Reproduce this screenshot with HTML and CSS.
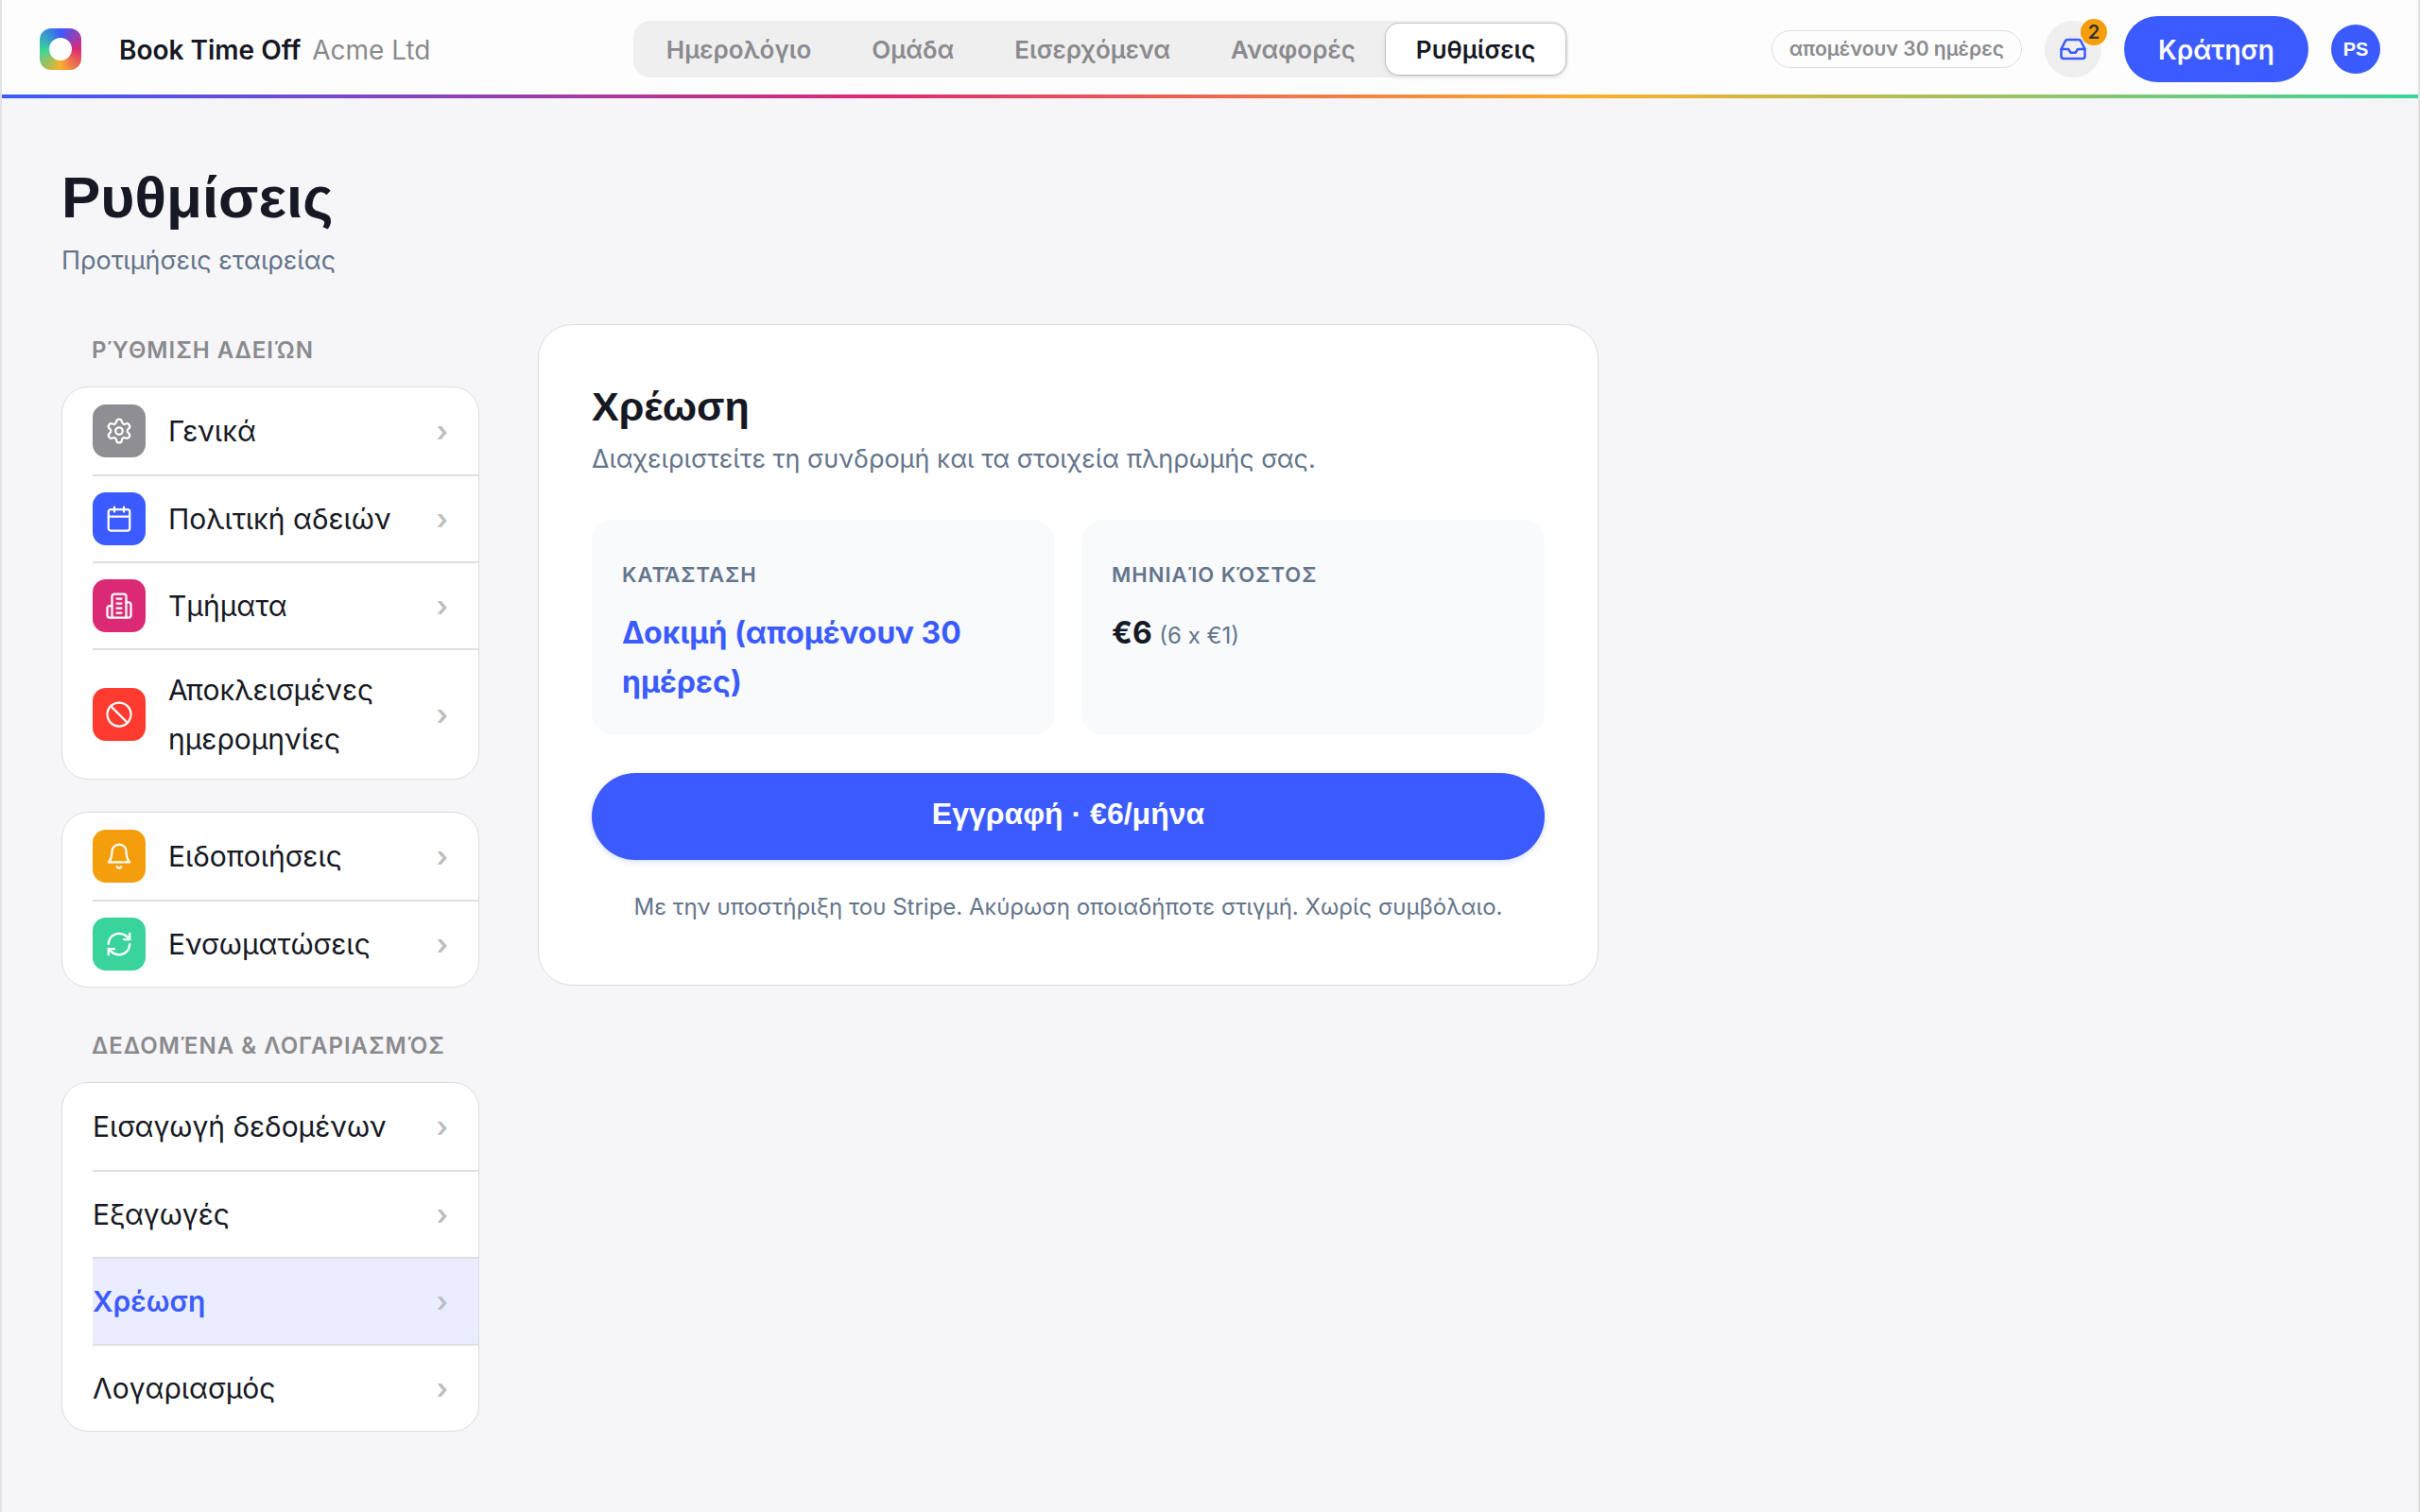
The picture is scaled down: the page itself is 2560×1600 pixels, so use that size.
FILE: index.html
```html
<!DOCTYPE html>
<html lang="el">
<head>
    <meta charset="UTF-8">
    <meta name="viewport" content="width=device-width, initial-scale=1.0">
    <title>Ρυθμίσεις - Book Time Off</title>
    <link rel="stylesheet" href="styles.css">
</head>
<body>
    <!-- Header -->
    <header class="topbar">
        <a class="brand" href="#">
            <span class="logo"></span>
            <span class="brand-text"><strong>Book Time Off</strong> <span class="company">Acme Ltd</span></span>
        </a>
        <nav class="tabs">
            <a href="#">Ημερολόγιο</a>
            <a href="#">Ομάδα</a>
            <a href="#">Εισερχόμενα</a>
            <a href="#">Αναφορές</a>
            <a class="active" href="#">Ρυθμίσεις</a>
        </nav>
        <div class="actions">
            <span class="trial">απομένουν 30 ημέρες</span>
            <button class="inbox" type="button" aria-label="Εισερχόμενα">
                <svg viewBox="0 0 24 24"><path d="M22 12h-6l-2 3h-4l-2-3H2"/><path d="M5.45 5.11 2 12v6a2 2 0 0 0 2 2h16a2 2 0 0 0 2-2v-6l-3.45-6.89A2 2 0 0 0 16.76 4H7.24a2 2 0 0 0-1.79 1.11z"/></svg>
                <span class="badge">2</span>
            </button>
            <button class="book" type="button">Κράτηση</button>
            <button class="avatar" type="button">PS</button>
        </div>
    </header>

    <main class="page">
        <h1>Ρυθμίσεις</h1>
        <p class="subtitle">Προτιμήσεις εταιρείας</p>

        <div class="layout">
            <!-- Settings menu -->
            <aside class="menu">
                <h2 class="menu-title">ΡΎΘΜΙΣΗ ΑΔΕΙΏΝ</h2>
                <div class="group">
                    <a class="row" href="#">
                        <span class="icon gray"><svg viewBox="0 0 24 24"><path d="M9.67 4.14a2.34 2.34 0 0 1 4.66 0 2.34 2.34 0 0 0 3.32 1.91 2.34 2.34 0 0 1 2.33 4.04 2.34 2.34 0 0 0 0 3.83 2.34 2.34 0 0 1-2.33 4.03 2.34 2.34 0 0 0-3.32 1.92 2.34 2.34 0 0 1-4.66 0 2.34 2.34 0 0 0-3.32-1.92 2.34 2.34 0 0 1-2.33-4.03 2.34 2.34 0 0 0 0-3.83 2.34 2.34 0 0 1 2.33-4.04 2.34 2.34 0 0 0 3.32-1.91"/><circle cx="12" cy="12" r="3"/></svg></span>
                        <span class="label">Γενικά</span>
                        <span class="chevron">›</span>
                    </a>
                    <a class="row" href="#">
                        <span class="icon blue"><svg viewBox="0 0 24 24"><rect x="3" y="4" width="18" height="18" rx="2"/><path d="M8 2v4M16 2v4M3 10h18"/></svg></span>
                        <span class="label">Πολιτική αδειών</span>
                        <span class="chevron">›</span>
                    </a>
                    <a class="row" href="#">
                        <span class="icon pink"><svg viewBox="0 0 24 24"><path d="M6 22V4a2 2 0 0 1 2-2h8a2 2 0 0 1 2 2v18z"/><path d="M6 12H4a2 2 0 0 0-2 2v6a2 2 0 0 0 2 2h2M18 9h2a2 2 0 0 1 2 2v9a2 2 0 0 1-2 2h-2M10 6h4M10 10h4M10 14h4M10 18h4"/></svg></span>
                        <span class="label">Τμήματα</span>
                        <span class="chevron">›</span>
                    </a>
                    <a class="row" href="#">
                        <span class="icon red"><svg viewBox="0 0 24 24"><circle cx="12" cy="12" r="10"/><path d="m4.9 4.9 14.2 14.2"/></svg></span>
                        <span class="label">Αποκλεισμένες ημερομηνίες</span>
                        <span class="chevron">›</span>
                    </a>
                </div>

                <div class="group">
                    <a class="row" href="#">
                        <span class="icon orange"><svg viewBox="0 0 24 24"><path d="M18 8A6 6 0 0 0 6 8c0 7-3 9-3 9h18s-3-2-3-9"/><path d="M10.3 21a1.94 1.94 0 0 0 3.4 0"/></svg></span>
                        <span class="label">Ειδοποιήσεις</span>
                        <span class="chevron">›</span>
                    </a>
                    <a class="row" href="#">
                        <span class="icon green"><svg viewBox="0 0 24 24"><path d="M3 12a9 9 0 0 1 9-9 9.75 9.75 0 0 1 6.74 2.74L21 8"/><path d="M21 3v5h-5M21 12a9 9 0 0 1-9 9 9.75 9.75 0 0 1-6.74-2.74L3 16"/><path d="M8 16H3v5"/></svg></span>
                        <span class="label">Ενσωματώσεις</span>
                        <span class="chevron">›</span>
                    </a>
                </div>

                <h2 class="menu-title">ΔΕΔΟΜΈΝΑ &amp; ΛΟΓΑΡΙΑΣΜΌΣ</h2>
                <div class="group">
                    <a class="row" href="#"><span class="label">Εισαγωγή δεδομένων</span><span class="chevron">›</span></a>
                    <a class="row" href="#"><span class="label">Εξαγωγές</span><span class="chevron">›</span></a>
                    <a class="row active" href="#"><span class="label">Χρέωση</span><span class="chevron">›</span></a>
                    <a class="row" href="#"><span class="label">Λογαριασμός</span><span class="chevron">›</span></a>
                </div>
            </aside>

            <!-- Billing -->
            <section class="panel">
                <h2>Χρέωση</h2>
                <p class="panel-sub">Διαχειριστείτε τη συνδρομή και τα στοιχεία πληρωμής σας.</p>
                <div class="stats">
                    <div class="stat">
                        <h3>ΚΑΤΆΣΤΑΣΗ</h3>
                        <p class="value trial-value">Δοκιμή (απομένουν 30 ημέρες)</p>
                    </div>
                    <div class="stat">
                        <h3>ΜΗΝΙΑΊΟ ΚΌΣΤΟΣ</h3>
                        <p class="value">€6 <small>(6 x €1)</small></p>
                    </div>
                </div>
                <button class="subscribe" type="button">Εγγραφή · €6/μήνα</button>
                <p class="note">Με την υποστήριξη του Stripe. Ακύρωση οποιαδήποτε στιγμή. Χωρίς συμβόλαιο.</p>
            </section>
        </div>
    </main>
</body>
</html>
```

FILE: styles.css
```css
* {
    box-sizing: border-box;
}
body {
    margin: 0;
    min-height: 100vh;
    background: #f6f6f8;
    border: solid #e2e2e5;
    border-width: 0 2px;
    color: #161823;
    font-family: Inter, "Liberation Sans", sans-serif;
    font-size: 30px;
    line-height: 52px;
}
h1, h2, h3, p {
    margin: 0;
}
a {
    color: inherit;
    text-decoration: none;
}
button {
    border: 0;
    padding: 0;
    font-family: inherit;
    cursor: pointer;
}
svg {
    display: block;
    fill: none;
    stroke: currentColor;
    stroke-width: 1.8;
    stroke-linecap: round;
    stroke-linejoin: round;
}

/* Header */
.topbar {
    display: flex;
    align-items: center;
    justify-content: space-between;
    height: 104px;
    padding: 0 40px;
    background: linear-gradient(90deg, #3b5bff, #db2a75 36%, #fbb02a 66%, #38d49b) bottom / 100% 4px no-repeat #fdfdfd;
}
.brand {
    display: flex;
    align-items: center;
    gap: 40px;
    font-size: 28px;
}
.brand-text {
    padding-top: 2px;
}
.brand strong {
    font-weight: 600;
}
.company {
    color: #8a8a8e;
    margin-left: 4px;
}
.logo {
    display: flex;
    width: 44px;
    height: 44px;
    border-radius: 12px;
    background: conic-gradient(#3b5bff, #db2a75 25%, #fbb02a 50%, #38d49b 75%, #3b5bff);
}
.logo::after {
    content: "";
    width: 24px;
    height: 24px;
    margin: auto;
    border-radius: 50%;
    background: #fff;
}
.tabs {
    display: flex;
    height: 60px;
    padding: 3px;
    border-radius: 18px;
    background: #efeff0;
    font-size: 26px;
    font-weight: 600;
    color: #8a8a8e;
}
.tabs a {
    padding: 2px 32px 0;
    border-radius: 14px;
}
.tabs .active {
    background: #fff;
    color: #161823;
    box-shadow: 0 0 0 1px rgba(0, 0, 0, 0.15), 0 2px 6px rgba(0, 0, 0, 0.1);
}
.actions {
    display: flex;
    align-items: center;
    gap: 24px;
}
.trial {
    padding: 0 18px;
    border: 1px solid #dededf;
    border-radius: 20px;
    color: #8a8a8e;
    font-size: 21px;
    font-weight: 600;
    line-height: 38px;
}
.inbox {
    position: relative;
    width: 60px;
    height: 60px;
    border-radius: 50%;
    background: #efeff0;
    color: #3b5bff;
}
.inbox svg {
    width: 30px;
    height: 30px;
    margin: 0 auto;
    stroke-width: 2;
}
.badge {
    position: absolute;
    top: -2px;
    right: -6px;
    width: 28px;
    height: 28px;
    border-radius: 50%;
    background: #f59e0b;
    color: #33302e;
    font-size: 20px;
    font-weight: 600;
    line-height: 28px;
}
.book {
    height: 70px;
    padding: 2px 36px 0;
    border-radius: 35px;
    background: #3b5bff;
    color: #fff;
    font-size: 28px;
    font-weight: 600;
}
.avatar {
    width: 52px;
    height: 52px;
    border-radius: 50%;
    background: #3b5bff;
    color: #fff;
    font-family: "Liberation Sans", Arial, sans-serif;
    font-size: 20px;
    font-weight: 700;
}

/* Page */
.page {
    padding: 64px 63px;
}
h1 {
    font-family: "Liberation Sans", Arial, sans-serif;
    font-size: 62px;
    line-height: 82px;
}
.subtitle, .panel-sub {
    color: #64748b;
    font-size: 27px;
}
.layout {
    display: grid;
    grid-template-columns: 442px minmax(0, 1122px);
    gap: 62px;
    align-items: start;
    margin-top: 41px;
}

/* Menu */
.menu-title {
    padding: 0 32px;
    margin-bottom: 10px;
    color: #8a8a8e;
    font-size: 24px;
    font-weight: 600;
    line-height: 56px;
    letter-spacing: 1px;
    white-space: nowrap;
}
.group {
    overflow: hidden;
    margin-bottom: 34px;
    padding-left: 32px;
    border: 1px solid #dcdcdf;
    border-radius: 28px;
    background: #fff;
}
.row {
    display: flex;
    align-items: center;
    gap: 24px;
    min-height: 92px;
    padding: 16px 32px 16px 0;
}
.row + .row {
    border-top: 2px solid #dfdfe1;
}
.row.active {
    background: #eaedff;
}
.row.active .label {
    color: #3b5bff;
    font-weight: 600;
}
.label {
    flex: 1;
}
.chevron {
    color: #bcbcc0;
    font-weight: 600;
}
.icon {
    padding: 13px;
    border-radius: 14px;
    color: #fff;
}
.icon svg {
    width: 30px;
    height: 30px;
}
.gray { background: #8e8e93; }
.blue { background: #3b5bff; }
.pink { background: #db2a75; }
.red { background: #ff3b30; }
.orange { background: #f59e0b; }
.green { background: #38d49b; }

/* Billing panel */
.panel {
    padding: 56px;
    border: 1px solid #dcdcdf;
    border-radius: 36px;
    background: #fff;
}
.panel h2 {
    font-family: "Liberation Sans", Arial, sans-serif;
    font-size: 43px;
    line-height: 60px;
}
.stats {
    display: grid;
    grid-template-columns: 1fr 1fr;
    gap: 28px;
    margin: 38px 0 40px;
}
.stat {
    padding: 32px 32px 30px;
    border-radius: 24px;
    background: #f8fafc;
}
.stat h3 {
    margin-bottom: 10px;
    color: #64748b;
    font-size: 22px;
    font-weight: 600;
    letter-spacing: 1px;
}
.value {
    font-size: 32px;
    font-weight: 700;
}
.trial-value {
    color: #3b5bff;
}
.value small {
    color: #64748b;
    font-size: 24px;
    font-weight: 400;
}
.subscribe {
    width: 100%;
    height: 92px;
    padding-bottom: 6px;
    border-radius: 46px;
    background: #3b5bff;
    box-shadow: 0 2px 6px rgba(59, 91, 255, 0.2);
    color: #fff;
    font-family: "Liberation Sans", Arial, sans-serif;
    font-size: 32px;
    font-weight: 700;
}
.note {
    margin-top: 24px;
    color: #64748b;
    font-size: 24px;
    text-align: center;
}
```
